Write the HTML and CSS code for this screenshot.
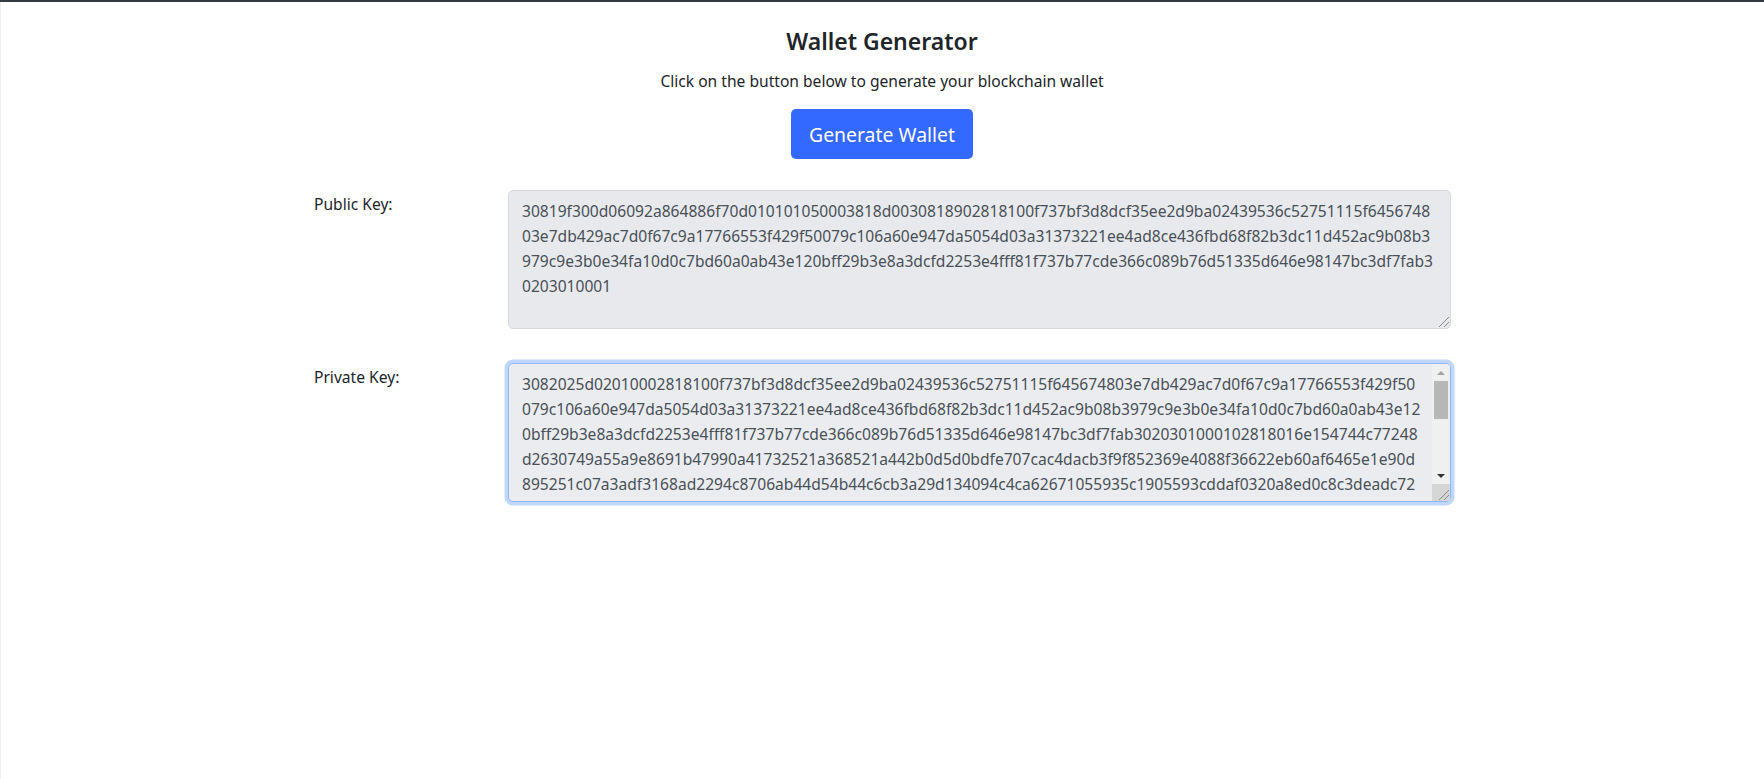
FILE: index.html
```html
<!DOCTYPE html>
<html lang="en">
<head>
<meta charset="utf-8">
<title>Wallet Generator</title>
<link rel="stylesheet" href="styles.css">
</head>
<body>
<main class="page">
  <header class="intro">
    <h1 class="title">Wallet Generator</h1>
    <p class="lead">Click on the button below to generate your blockchain wallet</p>
    <button class="btn" type="button">Generate Wallet</button>
  </header>
  <form class="keys">
    <div class="key-row">
      <label class="key-label" for="pub">Public Key:</label>
      <div class="key-field">
        <textarea class="key-box" id="pub" rows="4" readonly>30819f300d06092a864886f70d010101050003818d0030818902818100f737bf3d8dcf35ee2d9ba02439536c52751115f645674803e7db429ac7d0f67c9a17766553f429f50079c106a60e947da5054d03a31373221ee4ad8ce436fbd68f82b3dc11d452ac9b08b3979c9e3b0e34fa10d0c7bd60a0ab43e120bff29b3e8a3dcfd2253e4fff81f737b77cde366c089b76d51335d646e98147bc3df7fab30203010001</textarea>
        <svg class="grip" width="13" height="13" viewBox="0 0 13 13" aria-hidden="true"><path d="M2 12 12 2M7 12 12 7" /></svg>
      </div>
    </div>
    <div class="key-row">
      <label class="key-label" for="priv">Private Key:</label>
      <div class="key-field">
        <textarea class="key-box key-box-focus" id="priv" rows="4" readonly>3082025d02010002818100f737bf3d8dcf35ee2d9ba02439536c52751115f645674803e7db429ac7d0f67c9a17766553f429f50079c106a60e947da5054d03a31373221ee4ad8ce436fbd68f82b3dc11d452ac9b08b3979c9e3b0e34fa10d0c7bd60a0ab43e120bff29b3e8a3dcfd2253e4fff81f737b77cde366c089b76d51335d646e98147bc3df7fab3020301000102818016e154744c77248d2630749a55a9e8691b47990a41732521a368521a442b0d5d0bdfe707cac4dacb3f9f852369e4088f36622eb60af6465e1e90d895251c07a3adf3168ad2294c8706ab44d54b44c6cb3a29d134094c4ca62671055935c1905593cddaf0320a8ed0c8c3deadc72e4a1b09d7733f5c2681ae0c94d27b6f1035ea8c4197d26fb30e85a6c41f7d92b08e34ac17f6d05b923ce8a417f60d3b92c5e18a74f0d36cb29e541a87d3f06b2c9e415a07d83f26bc1e94a50d7f3286c1be94a07d5f3c2816be09a4d7f5326c18eb04a97df3562c1080be9d4a73f6c5218e0b7a49d6f3c15820be47a9d3f6c1582e04b7a9d6f3c15280be47d9a3f6c0152</textarea>
        <div class="scrollbar" aria-hidden="true">
          <span class="sb-arrow sb-up"></span>
          <span class="sb-track"><span class="sb-thumb"></span></span>
          <span class="sb-arrow sb-down"></span>
          <span class="sb-corner"></span>
        </div>
        <svg class="grip" width="13" height="13" viewBox="0 0 13 13" aria-hidden="true"><path d="M2 12 12 2M7 12 12 7" /></svg>
      </div>
    </div>
  </form>
</main>
</body>
</html>
```
FILE: styles.css
```css
* { box-sizing: border-box; }
html, body { height: 100%; }
body {
  margin: 0;
  font-family: "Noto Sans", "Open Sans", sans-serif;
  font-size: 15.6px;
  color: #212529;
  background: #fff;
  border-top: 2px solid #343a40;
  box-shadow: inset 1px 0 0 #efefef;
}
.page {
  width: 1140px;
  margin: 0 auto;
}
.intro {
  display: flex;
  flex-direction: column;
  align-items: center;
  padding-top: 22px;
}
.title {
  margin: 0;
  font-size: 23px;
  font-weight: 600;
  line-height: 34px;
}
.lead {
  margin: 11px 0 0;
  line-height: 25px;
}
.btn {
  margin-top: 15px;
  height: 50px;
  width: 182px;
  padding: 0;
  border: 0;
  border-radius: 5px;
  background: #3369ff;
  color: #fff;
  font: inherit;
  font-size: 19.4px;
}
.keys {
  display: flex;
  flex-direction: column;
  gap: 34px;
  margin-top: 31px;
}
.key-row {
  display: flex;
  align-items: flex-start;
  padding-left: 2px;
}
.key-label {
  width: 194px;
  flex: none;
  line-height: 25px;
  padding-top: 2px;
}
.key-field {
  position: relative;
  width: 943px;
}
.key-box {
  display: block;
  width: 100%;
  height: 139px;
  padding: 8px 13px;
  margin: 0;
  border: 1px solid #d6d8dc;
  border-radius: 5px;
  background: #e8e9ed;
  color: #495057;
  font: inherit;
  line-height: 25.1px;
  outline: 0;
  resize: none;
  overflow: hidden;
}
.key-box-focus {
  padding-right: 28px;
  border-color: #8fb8fb;
  box-shadow: 0 0 0 3.5px #c0d6fb;
  background: #ebecef;
}
.grip {
  position: absolute;
  right: 1px;
  bottom: 1px;
  fill: none;
  stroke: #8a8a8a;
  stroke-width: 1;
  pointer-events: none;
}
.scrollbar {
  position: absolute;
  top: 1px;
  right: 1px;
  bottom: 1px;
  width: 18px;
  display: flex;
  flex-direction: column;
  background: #f0f0f0;
  border-radius: 0 4px 4px 0;
  overflow: hidden;
  pointer-events: none;
}
.sb-arrow {
  flex: none;
  height: 17px;
  display: flex;
  align-items: center;
  justify-content: center;
}
.sb-arrow::before {
  content: "";
  border-left: 4px solid transparent;
  border-right: 4px solid transparent;
}
.sb-up::before { border-bottom: 4px solid #a3a3a3; }
.sb-down::before { border-top: 4px solid #333; }
.sb-track {
  flex: 1;
  padding: 0 2px;
}
.sb-thumb {
  display: block;
  height: 38px;
  background: #b7b7b7;
}
.sb-corner {
  flex: none;
  height: 17px;
  background: #d6d6d6;
}
```
